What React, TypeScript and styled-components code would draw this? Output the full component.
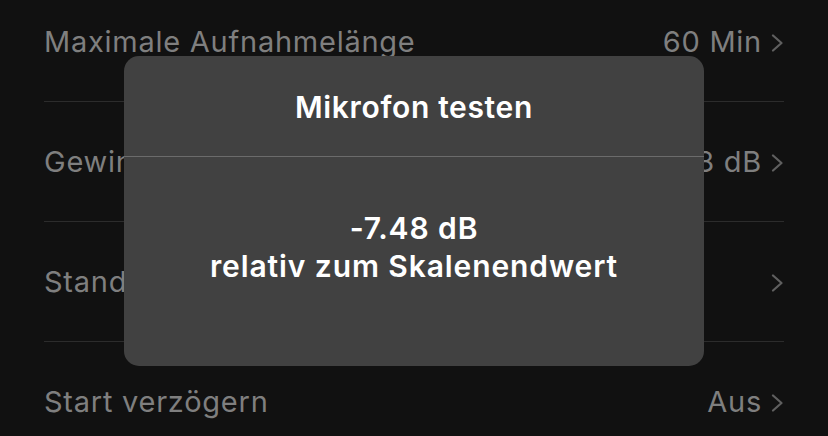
import styled, { createGlobalStyle } from 'styled-components';

const GlobalStyle = createGlobalStyle`
  html, body {
    margin: 0;
    padding: 0;
    background: #111111;
    overflow: hidden;
  }
  body {
    font-family: Inter, "Noto Sans", "Liberation Sans", sans-serif;
    -webkit-font-smoothing: antialiased;
  }
`;

type Setting = { label: string; value?: string };

const settings: Setting[] = [
  { label: 'Maximale Aufnahmelänge', value: '60 Min' },
  { label: 'Gewinn', value: '+0.48 dB' },
  { label: 'Standard-Speicherort' },
  { label: 'Start verzögern', value: 'Aus' },
];

function Chevron() {
  return (
    <svg width='13' height='18' viewBox='0 0 13 18' fill='none'>
      <path
        d='M2 1.5L10.5 9L2 16.5'
        stroke='#5f5f5f'
        strokeWidth='2.2'
        strokeLinecap='round'
        strokeLinejoin='round'
      />
    </svg>
  );
}

export default function App() {
  return (
    <Screen>
      <GlobalStyle />
      <List>
        {settings.map((s) => (
          <Row key={s.label}>
            <span className='label'>{s.label}</span>
            <span className='right'>
              {s.value && <span className='value'>{s.value}</span>}
              <Chevron />
            </span>
          </Row>
        ))}
      </List>

      <Dialog>
        <DialogTitle>Mikrofon testen</DialogTitle>
        <DialogBody>
          <div>-7.48 dB</div>
          <div>relativ zum Skalenendwert</div>
        </DialogBody>
      </Dialog>
    </Screen>
  );
}

const Screen = styled.div`
  position: relative;
  width: 828px;
  height: 436px;
  overflow: hidden;
  background: #111111;
`;

const List = styled.div`
  margin-top: -18px;
  margin-left: 44px;
  width: 740px;
`;

const Row = styled.div`
  display: flex;
  align-items: center;
  justify-content: space-between;
  height: 119px;
  border-bottom: 1px solid #2c2c2c;
  font-size: 29px;
  letter-spacing: 0.75px;
  color: #7f7f7f;

  .right {
    display: flex;
    align-items: center;
    gap: 9px;
  }

  svg {
    margin-top: 2px;
  }
`;

const Dialog = styled.div`
  position: absolute;
  top: 56px;
  left: 124px;
  width: 580px;
  height: 310px;
  border-radius: 15px;
  background: #414141;
  color: #ffffff;
  display: flex;
  flex-direction: column;
  font-weight: 600;
  font-size: 30px;
`;

const DialogTitle = styled.div`
  height: 99px;
  padding-top: 1px;
  display: flex;
  align-items: center;
  justify-content: center;
  letter-spacing: 0.65px;
  border-bottom: 1px solid #6b6b6b;
`;

const DialogBody = styled.div`
  flex: 1;
  padding-top: 52px;
  text-align: center;
  line-height: 38px;
  letter-spacing: 0.9px;
`;
